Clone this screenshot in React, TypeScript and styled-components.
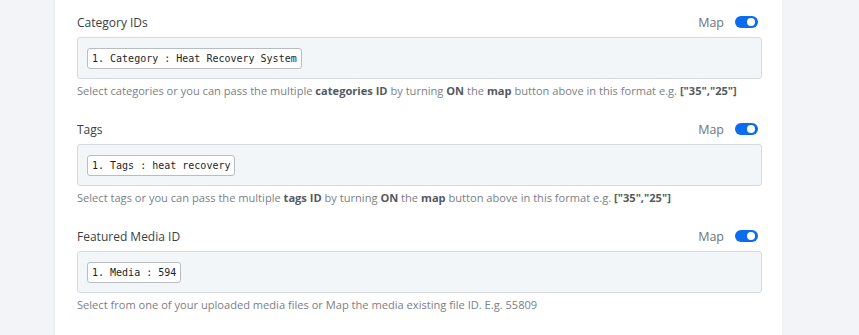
import React from 'react';
import styled, {createGlobalStyle} from "styled-components";

const GlobalStyle = createGlobalStyle`
  html, body {
    margin: 0;
    padding: 0;
    background: #f2f4f7;
  }
  body {
    font-family: "Open Sans", "Liberation Sans", sans-serif;
  }
`

const Page = styled.div`
  min-height: 335px;
  padding-left: 54px;
`

const Card = styled.div`
  width: 685px;
  min-height: 335px;
  background: #fff;
  border-left: 1px solid #e9ecf0;
  box-shadow: 0 0 2px rgba(0, 0, 0, 0.04);
  padding: 12px 20px 0 22px;
  box-sizing: content-box;
`

const Field = styled.div`
  margin-bottom: 20px;
`

const Header = styled.div`
  display: flex;
  align-items: center;
  justify-content: space-between;
  height: 20px;
  margin-bottom: 5px;
`

const Label = styled.label`
  font-size: 12px;
  color: #3b3f45;
`

const MapSwitch = styled.div`
  display: flex;
  align-items: center;
  gap: 11px;
  font-size: 12.5px;
  color: #6f757c;
  padding-right: 4px;
`

const Track = styled.span<{ on?: boolean }>`
  position: relative;
  display: inline-block;
  width: 23px;
  height: 12px;
  border-radius: 6px;
  background: ${p => p.on ? "#0b6cf0" : "#c5cad1"};

  &::after {
    content: "";
    position: absolute;
    top: 2px;
    left: ${p => p.on ? "12px" : "2px"};
    width: 8px;
    height: 8px;
    border-radius: 50%;
    background: #fff;
  }
`

const Box = styled.div`
  height: 42px;
  box-sizing: border-box;
  border: 1px solid #d6dadf;
  border-radius: 3px;
  background: #f3f6f9;
  display: flex;
  align-items: center;
  padding: 0 9px;
`

const Chip = styled.span`
  display: inline-block;
  height: 21px;
  line-height: 19px;
  box-sizing: border-box;
  padding: 0 4px;
  border: 1px solid #b9bdc2;
  border-radius: 3px;
  background: #fff;
  font-family: "DejaVu Sans Mono", "Liberation Mono", monospace;
  font-size: 10px;
  color: #1d1f2b;
  white-space: nowrap;
`

const Help = styled.p`
  margin: 4px 0 0;
  font-size: 11.1px;
  line-height: 16px;
  color: #7b8087;

  b {
    color: #555a61;
    font-weight: 700;
  }
`

type FieldProps = {
    label: string,
    chip: string,
    children: React.ReactNode
}

const MappedField = ({label, chip, children}: FieldProps) => (
    <Field>
        <Header>
            <Label>{label}</Label>
            <MapSwitch>Map<Track on/></MapSwitch>
        </Header>
        <Box><Chip>{chip}</Chip></Box>
        <Help>{children}</Help>
    </Field>
)

export default function App() {
    return (
        <>
            <GlobalStyle/>
            <Page>
                <Card>
                    <MappedField label="Category IDs" chip="1. Category : Heat Recovery System">
                        Select categories or you can pass the multiple <b>categories ID</b> by turning <b>ON</b> the <b>map</b> button above in this format e.g. <b>["35","25"]</b>
                    </MappedField>
                    <MappedField label="Tags" chip="1. Tags : heat recovery">
                        Select tags or you can pass the multiple <b>tags ID</b> by turning <b>ON</b> the <b>map</b> button above in this format e.g. <b>["35","25"]</b>
                    </MappedField>
                    <MappedField label="Featured Media ID" chip="1. Media : 594">
                        Select from one of your uploaded media files or Map the media existing file ID. E.g. 55809
                    </MappedField>
                </Card>
            </Page>
        </>
    );
}
